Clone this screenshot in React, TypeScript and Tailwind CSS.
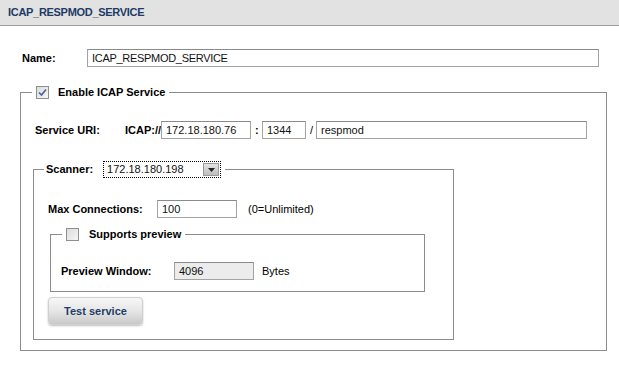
import React from "react";

const font = { fontFamily: '"Liberation Sans", Arial, sans-serif' };

const Check = ({ checked }: { checked: boolean }) => (
  <span className="inline-flex items-center justify-center w-[13px] h-[13px] border border-[#8e8f8f] bg-gradient-to-br from-[#dcdcdc] to-[#f6f6f6]">
    {checked && (
      <svg width="9" height="9" viewBox="0 0 9 9">
        <path d="M1 4.5 L3.5 7 L8 1.5" fill="none" stroke="#4a5f97" strokeWidth="1.6" />
      </svg>
    )}
  </span>
);

const TextBox = ({
  value,
  className,
}: {
  value: string;
  className: string;
}) => (
  <div
    className={`h-[18px] border border-[#a3a3a3] border-t-[#8a8a8a] flex items-center pl-[4px] text-[11px] text-[#111] ${className}`}
  >
    {value}
  </div>
);

const App = () => {
  return (
    <div className="w-[619px] h-[365px] bg-white text-black overflow-hidden" style={font}>
      <div className="h-[26px] bg-[#e2e2e2] border-b border-[#9c9c9c] flex items-center pl-[8px]">
        <span className="text-[11px] font-bold text-[#1d3b66] tracking-[-0.3px]">
          ICAP_RESPMOD_SERVICE
        </span>
      </div>

      <div className="pl-[20px]">
        <div className="flex items-center mt-[23px] pl-[2px]">
          <span className="w-[65px] text-[11px] font-bold">Name:</span>
          <TextBox value="ICAP_RESPMOD_SERVICE" className="w-[512px] bg-white tracking-[-0.3px]" />
        </div>

        <fieldset className="mt-[18px] w-[587px] border border-[#8c8c8c]">
          <legend className="ml-[11px] px-[4px] h-[14px] flex items-center">
            <Check checked />
            <span className="ml-[9px] text-[11px] font-bold">Enable ICAP Service</span>
          </legend>

          <div className="pl-[12px] pb-[10px]">
            <div className="flex items-center mt-[22px] pl-[2px] text-[11px]">
              <span className="w-[90px] font-bold">Service URI:</span>
              <span className="w-[36px] font-bold">ICAP://</span>
              <TextBox value="172.18.180.76" className="w-[90px]" />
              <span className="w-[11px] pl-[4px] font-bold">:</span>
              <TextBox value="1344" className="w-[44px]" />
              <span className="w-[10px] pl-[4px]">/</span>
              <TextBox value="respmod" className="w-[271px]" />
            </div>

            <fieldset className="mt-[22px] w-[421px] border border-[#8c8c8c]">
              <legend className="ml-[10px] pl-[2px] pr-[4px] h-[17px] flex items-center">
                <span className="text-[11px] font-bold">Scanner:</span>
                <div className="ml-[10px] w-[118px] h-[17px] border border-dotted border-black flex items-center">
                  <span className="flex-1 pl-[3px] text-[11px] text-[#111]">172.18.180.198</span>
                  <span className="w-[16px] h-[13px] mr-[1px] bg-gradient-to-b from-[#e4e4e4] to-[#bdbdbd] border border-[#9a9a9a] flex items-center justify-center">
                    <svg width="7" height="4" viewBox="0 0 7 4">
                      <path d="M0 0 H7 L3.5 4 Z" fill="#222" />
                    </svg>
                  </span>
                </div>
              </legend>

              <div className="pl-[14px] pb-[14px]">
                <div className="flex items-center mt-[22px] text-[11px]">
                  <span className="w-[109px] font-bold">Max Connections:</span>
                  <TextBox value="100" className="w-[80px]" />
                  <span className="ml-[11px]">(0=Unlimited)</span>
                </div>

                <fieldset className="mt-[9px] ml-[2px] w-[375px] border border-[#8c8c8c]">
                  <legend className="ml-[11px] px-[4px] h-[14px] flex items-center">
                    <Check checked={false} />
                    <span className="ml-[10px] text-[11px] font-bold">Supports preview</span>
                  </legend>
                  <div className="pl-[10px] pb-[11px]">
                    <div className="flex items-center mt-[21px] text-[11px]">
                      <span className="w-[113px] font-bold">Preview Window:</span>
                      <TextBox value="4096" className="w-[80px] bg-[#ececec]" />
                      <span className="ml-[8px]">Bytes</span>
                    </div>
                  </div>
                </fieldset>

                <button className="mt-[5px] w-[95px] h-[28px] rounded-[4px] border border-[#cfcfcf] bg-gradient-to-b from-[#f7f7f7] via-[#e6e6e6] to-[#c9c9c9] shadow-[0_1px_2px_rgba(0,0,0,0.25)] text-[11px] font-bold text-[#1f3d68]">
                  Test service
                </button>
              </div>
            </fieldset>
          </div>
        </fieldset>
      </div>
    </div>
  );
};

export default App;
